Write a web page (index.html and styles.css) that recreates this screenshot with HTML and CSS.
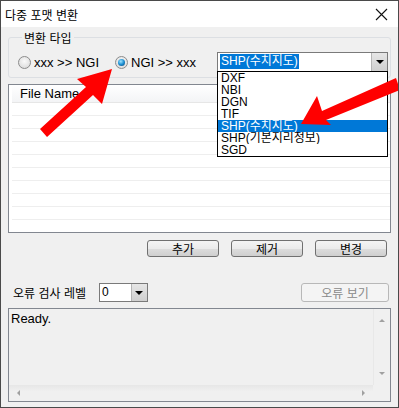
FILE: index.html
```html
<!DOCTYPE html>
<html lang="ko">
<head>
    <meta charset="UTF-8">
    <title>다중 포맷 변환</title>
    <link rel="stylesheet" href="styles.css">
</head>
<body>
    <div class="window">
        <div class="titlebar">
            <span class="title">다중 포맷 변환</span>
            <svg class="close" width="13" height="13" viewBox="0 0 13 13">
                <path d="M1 1 L12 12 M12 1 L1 12" stroke="#111" stroke-width="1.1" fill="none"/>
            </svg>
        </div>

        <div class="content">
            <fieldset class="group">
                <legend>변환 타입</legend>
                <div class="type-row">
                    <label class="radio"><span class="dot"></span>xxx &gt;&gt; NGI</label>
                    <label class="radio"><span class="dot checked"></span>NGI &gt;&gt; xxx</label>
                    <div class="combo wide">
                        <div class="combo-text"><span class="sel">SHP(수치지도)</span></div>
                        <div class="combo-btn"><span class="tri"></span></div>
                        <ul class="droplist">
                            <li>DXF</li>
                            <li>NBI</li>
                            <li>DGN</li>
                            <li>TIF</li>
                            <li class="hl">SHP(수치지도)</li>
                            <li>SHP(기본지리정보)</li>
                            <li>SGD</li>
                        </ul>
                    </div>
                </div>
            </fieldset>

            <div class="listview">
                <div class="lv-head">File Name</div>
                <div class="lv-row"></div>
                <div class="lv-row"></div>
                <div class="lv-row"></div>
                <div class="lv-row"></div>
                <div class="lv-row"></div>
                <div class="lv-row"></div>
                <div class="lv-row"></div>
                <div class="lv-row"></div>
                <div class="lv-row"></div>
                <div class="lv-row"></div>
            </div>

            <div class="buttons">
                <button class="btn">추가</button>
                <button class="btn">제거</button>
                <button class="btn">변경</button>
            </div>

            <div class="error-row">
                <span class="err-label">오류 검사 레벨</span>
                <div class="combo small">
                    <div class="combo-text">0</div>
                    <div class="combo-btn"><span class="tri"></span></div>
                </div>
                <button class="btn disabled" disabled>오류 보기</button>
            </div>

            <div class="logbox">
                <div class="log-text">Ready.</div>
                <div class="vscroll">
                    <span class="arr up"></span>
                    <span class="arr down"></span>
                </div>
                <div class="hscroll">
                    <span class="arr left"></span>
                    <span class="arr right"></span>
                </div>
                <div class="corner"></div>
            </div>
        </div>

        <!-- red call-out arrows drawn over the dialog -->
        <svg class="arrows" width="399" height="408" viewBox="0 0 399 408">
            <polygon fill="#ff0000" points="40,129 86,87 77,79 112,69 102,104 93,95 47,137"/>
            <polygon fill="#ff0000" points="396,78 322,111 317,96 301,124 331,125 326,120 400,90"/>
        </svg>
    </div>
</body>
</html>
```

FILE: styles.css
```css
* {
    box-sizing: border-box;
}
body {
    margin: 0;
    font-family: "Liberation Sans", "Noto Sans CJK KR", sans-serif;
    font-size: 12px;
    color: #000;
}
.window {
    position: relative;
    width: 399px;
    height: 408px;
    border: 1px solid #4a4a4a;
    background: #f0f0f0;
    overflow: hidden;
}
.titlebar {
    height: 26px;
    background: #fff;
    display: flex;
    align-items: center;
    justify-content: space-between;
    padding: 0 10px 0 4px;
}
.title {
    font-family: "Noto Sans CJK KR", sans-serif;
    font-size: 12px;
}
.content {
    padding: 0 7px 0 7px;
}
.group {
    margin: 3px 0 0 0;
    padding: 7px 2px 5px 9px;
    border: 1px solid #dcdfe3;
    border-radius: 3px;
    min-inline-size: 0;
}
.group legend {
    font-family: "Noto Sans CJK KR", sans-serif;
    padding: 0 2px;
    margin-left: 4px;
    line-height: 15px;
}
.type-row {
    display: flex;
    align-items: center;
}
.radio {
    display: flex;
    align-items: center;
    gap: 3px;
    font-size: 13px;
    margin-right: 16px;
}
.dot {
    width: 13px;
    height: 13px;
    border-radius: 50%;
    border: 1px solid #8c8c8c;
    background: radial-gradient(circle at 50% 40%, #fafafa 0%, #e0e0e0 70%, #cfcfcf 100%);
    position: relative;
}
.dot.checked::after {
    content: "";
    position: absolute;
    left: 2px;
    top: 2px;
    width: 7px;
    height: 7px;
    border-radius: 50%;
    background: radial-gradient(circle at 40% 35%, #9fe3ff 0%, #1b8fd2 50%, #0a3c6e 100%);
}
.combo {
    position: relative;
    display: flex;
    background: #fff;
    border: 1px solid #7a7a7a;
}
.combo.wide {
    margin-left: auto;
    width: 171px;
    height: 20px;
}
.combo.small {
    width: 49px;
    height: 19px;
}
.combo-text {
    flex: 1;
    padding: 1px 2px;
    line-height: 15px;
}
.sel {
    display: inline-block;
    background: #0078d7;
    color: #fff;
    padding: 0 1px;
}
.combo-btn {
    width: 16px;
    background: linear-gradient(#e6e6e6, #cfcfcf);
    border-left: 1px solid #b5b5b5;
    display: flex;
    align-items: center;
    justify-content: center;
}
.tri {
    width: 0;
    height: 0;
    border-left: 4px solid transparent;
    border-right: 4px solid transparent;
    border-top: 4px solid #000;
}
.droplist {
    position: absolute;
    left: -1px;
    top: 18px;
    width: 171px;
    margin: 0;
    padding: 0;
    list-style: none;
    background: #fff;
    border: 1px solid #000;
    z-index: 2;
}
.droplist li {
    height: 12px;
    line-height: 12px;
    padding-left: 3px;
    overflow: hidden;
}
.droplist li.hl {
    background: #0078d7;
    color: #fff;
}
.listview {
    margin-top: 6px;
    height: 149px;
    background: #fff;
    border: 1px solid #828790;
    padding-left: 3px;
    overflow: hidden;
}
.lv-head {
    height: 18px;
    line-height: 17px;
    padding-left: 8px;
    font-size: 13px;
    background: linear-gradient(#ffffff, #f3f4f6);
    border-bottom: 1px solid #e6e6e6;
}
.lv-row {
    height: 13px;
    border-bottom: 1px solid #eeeeee;
}
.buttons {
    display: flex;
    justify-content: flex-end;
    gap: 12px;
    margin-top: 7px;
    padding-right: 4px;
}
.btn {
    height: 17px;
    width: 72px;
    padding: 0;
    font-family: "Noto Sans CJK KR", sans-serif;
    font-size: 12px;
    line-height: 14px;
    color: #000;
    border: 1px solid #707070;
    border-radius: 3px;
    background: linear-gradient(#f4f4f4 0%, #ebebeb 50%, #dddddd 51%, #cfcfcf 100%);
}
.btn.disabled {
    width: 88px;
    height: 19px;
    margin-left: auto;
    margin-right: 2px;
    color: #8a8a8a;
    border-color: #b8b8b8;
    background: #f4f4f4;
}
.error-row {
    display: flex;
    align-items: center;
    margin-top: 26px;
    padding-left: 5px;
}
.err-label {
    font-family: "Noto Sans CJK KR", sans-serif;
    margin-right: 13px;
}
.logbox {
    margin-top: 6px;
    height: 94px;
    border: 1px solid #828790;
    display: grid;
    grid-template-columns: 1fr 17px;
    grid-template-rows: 1fr 16px;
}
.log-text {
    padding: 2px 2px;
    font-size: 13px;
}
.vscroll, .hscroll, .corner {
    position: relative;
    background: #f0f0f0;
}
.vscroll {
    border-left: 1px solid #e8e8e8;
}
.hscroll {
    background: linear-gradient(#e6e6e6, #f0f0f0 40%);
}
.arr {
    position: absolute;
    width: 0;
    height: 0;
}
.arr.up {
    left: 5px;
    top: 10px;
    border-left: 3px solid transparent;
    border-right: 3px solid transparent;
    border-bottom: 3px solid #a0a0a0;
}
.arr.down {
    left: 5px;
    bottom: 10px;
    border-left: 3px solid transparent;
    border-right: 3px solid transparent;
    border-top: 3px solid #a0a0a0;
}
.arr.left {
    left: 8px;
    top: 5px;
    border-top: 3px solid transparent;
    border-bottom: 3px solid transparent;
    border-right: 3px solid #a0a0a0;
}
.arr.right {
    right: 8px;
    top: 5px;
    border-top: 3px solid transparent;
    border-bottom: 3px solid transparent;
    border-left: 3px solid #a0a0a0;
}
.arrows {
    position: absolute;
    left: -1px;
    top: -1px;
    pointer-events: none;
    z-index: 5;
}
```
